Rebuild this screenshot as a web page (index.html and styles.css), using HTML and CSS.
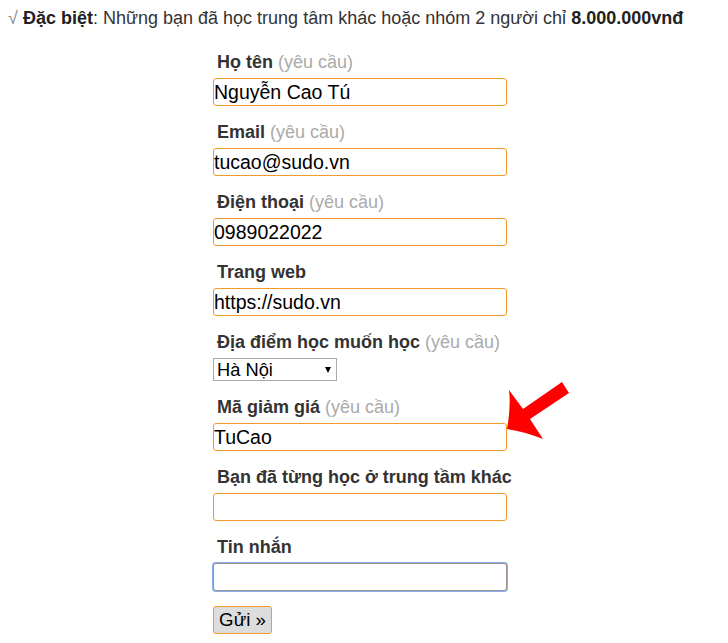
FILE: index.html
```html
<!DOCTYPE html>
<html lang="vi">
<head>
<meta charset="utf-8">
<title>Đăng ký</title>
<link rel="stylesheet" href="styles.css">
</head>
<body>
<p class="note"><span class="tick">√</span> <b>Đặc biệt</b>: Những bạn đã học trung tâm khác hoặc nhóm 2 người chỉ <b>8.000.000vnđ</b></p>
<form class="form">
  <div class="field">
    <label class="label">Họ tên <span class="req">(yêu cầu)</span></label>
    <input class="input" type="text" value="Nguyễn Cao Tú">
  </div>
  <div class="field">
    <label class="label">Email <span class="req">(yêu cầu)</span></label>
    <input class="input" type="text" value="tucao@sudo.vn">
  </div>
  <div class="field">
    <label class="label">Điện thoại <span class="req">(yêu cầu)</span></label>
    <input class="input" type="text" value="0989022022">
  </div>
  <div class="field">
    <label class="label">Trang web</label>
    <input class="input" type="text" value="https://sudo.vn">
  </div>
  <div class="field">
    <label class="label">Địa điểm học muốn học <span class="req">(yêu cầu)</span></label>
    <span class="select-wrap"><select class="select"><option>Hà Nội</option><option>TP. Hồ Chí Minh</option></select></span>
  </div>
  <div class="field">
    <label class="label">Mã giảm giá <span class="req">(yêu cầu)</span></label>
    <div class="input-wrap">
      <input class="input" type="text" value="TuCao">
      <svg class="arrow" width="70" height="62" viewBox="0 0 70 62" aria-hidden="true">
        <path d="M2,51 Q6,28 4,12 L18,31 L57,4 L64,15 L25,41 L38,61 Q18,53 2,51 Z" fill="#ff0000"/>
      </svg>
    </div>
  </div>
  <div class="field">
    <label class="label">Bạn đã từng học ở trung tầm khác</label>
    <input class="input" type="text" value="">
  </div>
  <div class="field">
    <label class="label">Tin nhắn</label>
    <input class="input input-focus" type="text" value="">
  </div>
  <div class="actions">
    <button class="button" type="button">Gửi »</button>
  </div>
</form>
</body>
</html>
```
FILE: styles.css
```css
html, body {
  margin: 0;
  padding: 0;
  background: #ffffff;
}
body {
  padding: 8px;
  font-family: "Liberation Sans", Arial, sans-serif;
  color: #333333;
}
.note {
  margin: 0;
  font-size: 18px;
  line-height: 20px;
  white-space: nowrap;
}
.tick {
  color: #888888;
}
.note b {
  color: #222222;
}
.form {
  margin: 24px 0 0 205px;
  display: flex;
  flex-direction: column;
  gap: 16px;
  width: 300px;
}
.field {
  display: flex;
  flex-direction: column;
  align-items: flex-start;
  gap: 6px;
}
.label {
  font-size: 18px;
  line-height: 20px;
  font-weight: bold;
  color: #333333;
  padding-left: 4px;
  white-space: nowrap;
}
.req {
  font-weight: normal;
  color: #aaaaaa;
}
.input-wrap {
  position: relative;
}
.input {
  box-sizing: border-box;
  width: 294px;
  height: 28px;
  margin: 0;
  padding: 0;
  border: 1px solid #f39a2a;
  border-radius: 3px;
  font-family: "Liberation Sans", Arial, sans-serif;
  font-size: 19.5px;
  color: #000000;
  background: #ffffff;
  outline: none;
}
.input-focus {
  border-color: #a09088;
  box-shadow: 0 0 0 1px #86adf3;
}
.arrow {
  position: absolute;
  left: 292px;
  top: -45px;
}
.select-wrap {
  position: relative;
  display: inline-block;
}
.select-wrap::after {
  content: "";
  position: absolute;
  right: 6px;
  top: 9px;
  border-left: 3.5px solid transparent;
  border-right: 3.5px solid transparent;
  border-top: 6px solid #000000;
  pointer-events: none;
}
.select {
  -webkit-appearance: none;
  appearance: none;
  box-sizing: border-box;
  width: 124px;
  height: 23px;
  margin: 0;
  padding: 0 0 0 3px;
  border: 1px solid #a9a9a9;
  border-radius: 0;
  background: #ffffff;
  font-family: "Liberation Sans", Arial, sans-serif;
  font-size: 18.3px;
  color: #000000;
}
.actions {
  margin-top: -1px;
}
.button {
  box-sizing: border-box;
  width: 59px;
  height: 28px;
  margin: 0;
  padding: 0;
  border: 1px solid #f39a2a;
  border-radius: 3px;
  background: #dddddd;
  font-family: "Liberation Sans", Arial, sans-serif;
  font-size: 18.7px;
  color: #000000;
}
```
